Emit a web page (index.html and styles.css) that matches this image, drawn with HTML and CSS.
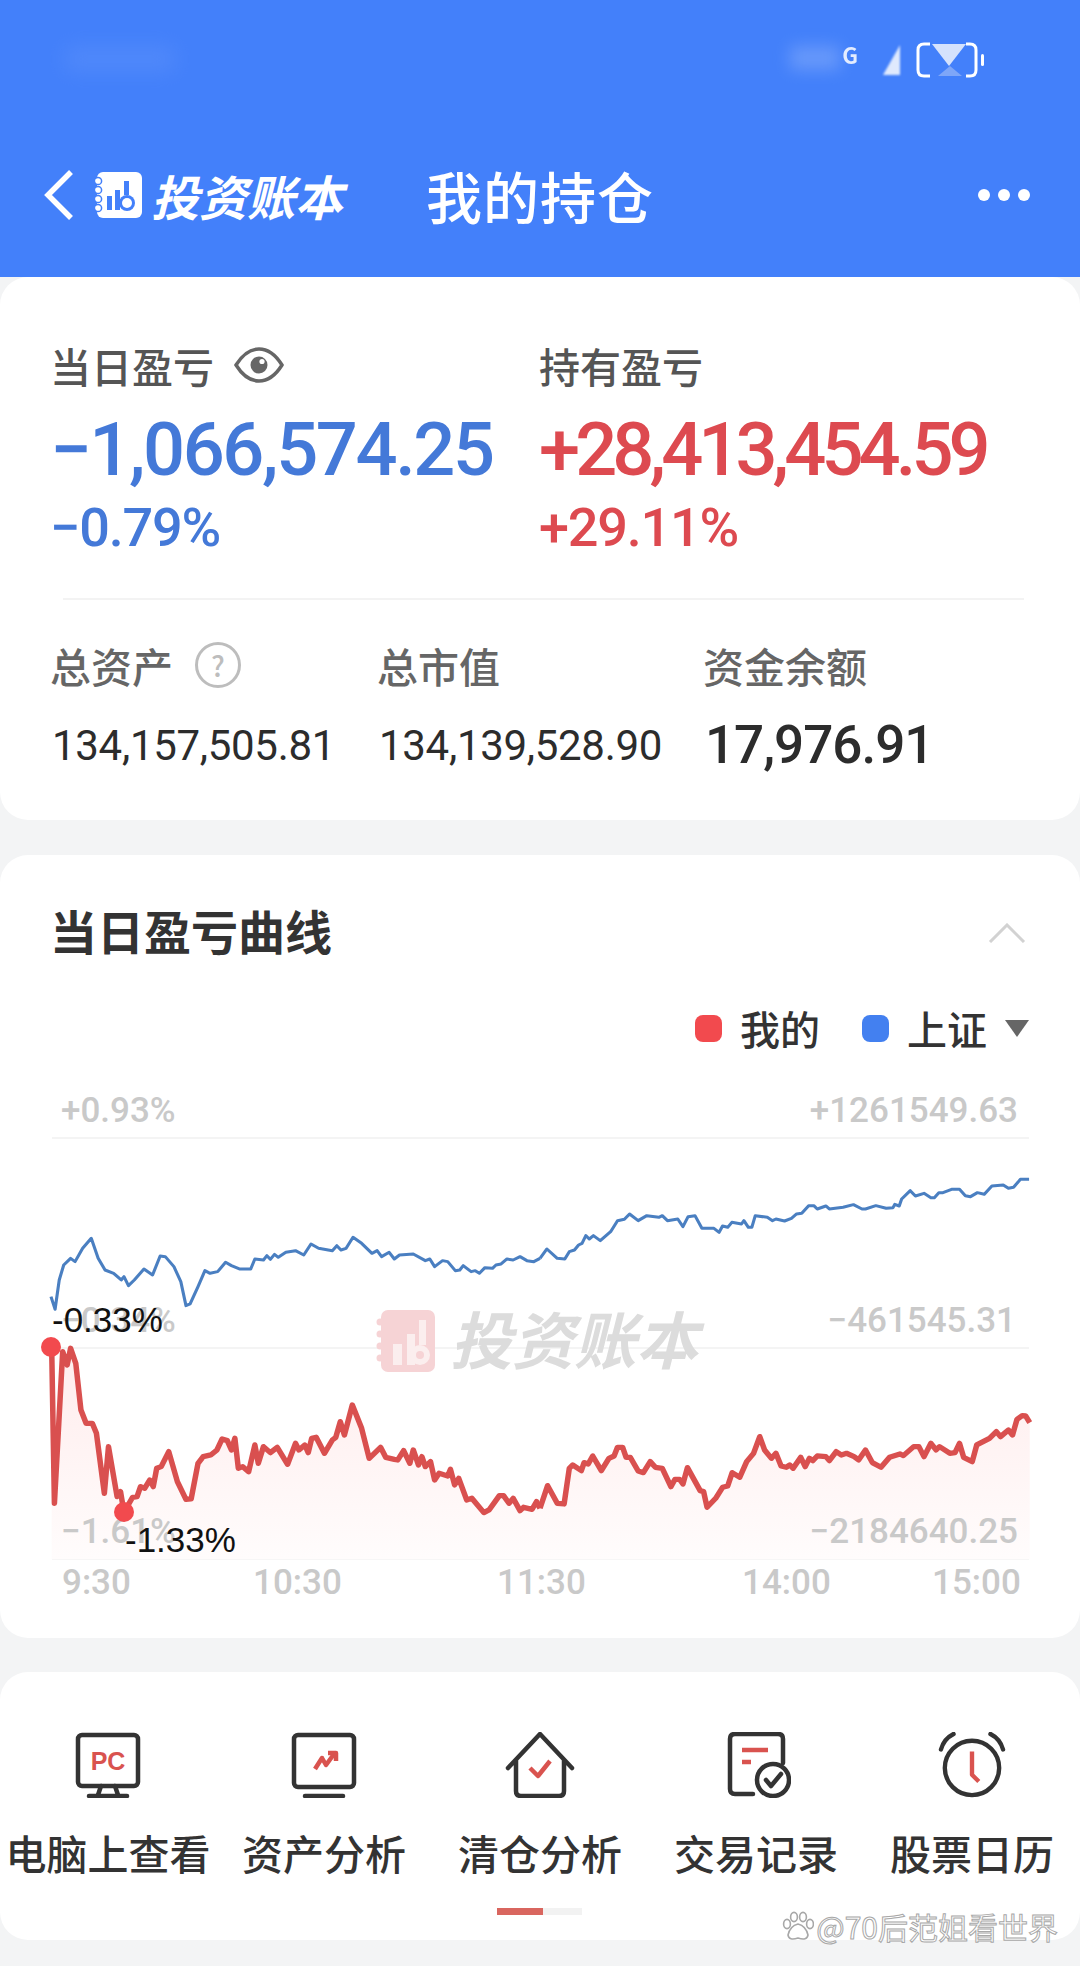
FILE: index.html
```html
<!DOCTYPE html>
<html lang="zh-CN">
<head>
  <meta charset="UTF-8">
  <meta name="viewport" content="width=device-width, initial-scale=1.0">
  <title>我的持仓</title>
  <link rel="stylesheet" href="styles.css">
</head>
<body>
  <header class="top">
    <!-- the status bar is smudged out in the original -->
    <div class="status">
      <span class="status-left"></span>
      <span class="status-mid"></span>
      <span class="status-g">G</span>
      <svg class="status-signal" width="20" height="32" viewBox="0 0 20 32"><path d="M18 1V31H1Z" fill="#dfe9fd"/></svg>
      <svg class="status-battery" width="68" height="36" viewBox="0 0 68 36">
        <path d="M14 2H8Q2 2 2 8V28Q2 34 8 34H14M50 2H54Q60 2 60 8V28Q60 34 54 34H50" fill="none" stroke="#fff" stroke-width="3"/>
        <path d="M16 2H50L33 24Z" fill="#d5e2fc"/>
        <path d="M22 34H46L34 24Z" fill="#7ea6f8"/>
        <rect x="65" y="12" width="3" height="12" rx="1.5" fill="#fff"/>
      </svg>
    </div>
    <nav class="nav">
      <svg class="nav-back" width="32" height="52" viewBox="0 0 32 52"><path d="M28 3L5 26L28 49" fill="none" stroke="#fff" stroke-width="5.5"/></svg>
      <svg class="nav-logo" width="48" height="46" viewBox="0 0 48 46">
        <rect x="3" y="0" width="45" height="46" rx="6" fill="#fff"/>
        <g fill="#fff" stroke="#4380fa" stroke-width="1.5">
          <circle cx="4" cy="9" r="3.6"/><circle cx="4" cy="18" r="3.6"/><circle cx="4" cy="27" r="3.6"/><circle cx="4" cy="36" r="3.6"/>
        </g>
        <g fill="#4380fa">
          <rect x="13" y="24" width="5" height="14"/>
          <rect x="21" y="18" width="5" height="20"/>
          <rect x="30" y="9" width="5" height="14"/>
          <circle cx="33" cy="31" r="8"/>
        </g>
        <circle cx="33" cy="31" r="5" fill="#fff"/>
      </svg>
      <span class="nav-brand">投资账本</span>
      <h1 class="nav-title">我的持仓</h1>
      <div class="nav-more"><i></i><i></i><i></i></div>
    </nav>
  </header>

  <section class="card summary">
    <div class="today">
      <div class="col">
        <div class="label">当日盈亏
          <svg class="eye" width="50" height="38" viewBox="0 0 50 38">
            <path d="M2 19Q12 3 25 3T48 19Q38 35 25 35T2 19Z" fill="none" stroke="#666" stroke-width="3.5"/>
            <circle cx="25" cy="19" r="8.5" fill="#666"/>
            <circle cx="28" cy="15.5" r="2.6" fill="#fff"/>
          </svg>
        </div>
        <div class="big blue">−1,066,574.25</div>
        <div class="pct blue">−0.79%</div>
      </div>
      <div class="col">
        <div class="label">持有盈亏</div>
        <div class="big red">+28,413,454.59</div>
        <div class="pct red">+29.11%</div>
      </div>
    </div>
    <div class="divider"></div>
    <div class="totals">
      <div>
        <div class="label small">总资产 <span class="help">?</span></div>
        <div class="amount">134,157,505.81</div>
      </div>
      <div>
        <div class="label small">总市值</div>
        <div class="amount">134,139,528.90</div>
      </div>
      <div>
        <div class="label small">资金余额</div>
        <div class="amount large">17,976.91</div>
      </div>
    </div>
  </section>

  <section class="card curve">
    <div class="curve-head">
      <h2>当日盈亏曲线</h2>
      <svg class="fold" width="38" height="20" viewBox="0 0 38 20"><path d="M2 19L19 2L36 19" fill="none" stroke="#d2d2d2" stroke-width="3"/></svg>
    </div>
    <div class="legend">
      <i class="dot dot-red"></i><span>我的</span>
      <i class="dot dot-blue"></i><span>上证</span>
      <svg class="legend-arrow" width="26" height="18" viewBox="0 0 26 18"><path d="M1 1H25L13 18Z" fill="#666"/></svg>
    </div>
    <svg class="chart" width="1080" height="520" viewBox="0 1090 1080 520">
      <defs>
        <linearGradient id="area" gradientUnits="userSpaceOnUse" x1="0" y1="900" x2="0" y2="1378">
          <stop offset="0" stop-color="#fff0f0"/>
          <stop offset="1" stop-color="#fffcfc"/>
        </linearGradient>
      </defs>

      <line class="grid" x1="52" y1="1138" x2="1029" y2="1138"/>
      <line class="grid" x1="52" y1="1348" x2="1029" y2="1348"/>
      <line class="grid" x1="52" y1="1559" x2="1029" y2="1559"/>

      <!-- watermark -->
      <g transform="translate(377 1310)">
        <rect x="4" y="0" width="54" height="62" rx="7" fill="#f6d3d5"/>
        <g fill="#fbeeee">
          <rect x="16" y="34" width="9" height="21"/>
          <rect x="30" y="24" width="8" height="31"/>
          <rect x="42" y="10" width="7" height="25"/>
          <circle cx="43" cy="45" r="10"/>
        </g>
        <circle cx="43" cy="45" r="4" fill="#f6d3d5"/>
        <g fill="#f6d3d5"><circle cx="3" cy="12" r="3.5"/><circle cx="3" cy="24" r="3.5"/><circle cx="3" cy="36" r="3.5"/><circle cx="3" cy="48" r="3.5"/></g>
      </g>
      <text class="mark" x="450" y="1364">投资账本</text>

      <g transform="translate(0 1100) scale(.3444 .3333)">
        <g fill="url(#area)">
          <polygon points="150,740 158,1210 182,755 195,795 205,745 220,790 235,930 250,970 268,970 280,1000 303,1180 315,1040 340,1190 350,1175 360,1237 385,1192 398,1190 408,1160 420,1165 435,1140 445,1160 455,1105 468,1100 490,1055 515,1145 540,1198 555,1197 575,1090 590,1070 612,1065 630,1050 645,1017 660,1022 672,1050 682,1015 692,1105 705,1100 722,1115 740,1035 750,1090 765,1040 785,1058 805,1042 835,1093 858,1030 868,1050 885,1035 895,1058 905,1015 918,1012 942,1060 965,1020 975,1012 988,965 1000,1005 1023,915 1050,985 1072,1075 1105,1042 1120,1072 1145,1078 1155,1080 1172,1052 1190,1090 1200,1050 1215,1095 1225,1070 1235,1100 1250,1085 1262,1140 1275,1120 1300,1128 1308,1108 1320,1155 1332,1135 1355,1200 1370,1195 1405,1238 1420,1230 1450,1187 1462,1187 1478,1210 1490,1195 1510,1232 1520,1222 1545,1228 1558,1205 1568,1225 1568,1378 150,1378"/>
          <polygon transform="translate(1568 0)" points="0,1225 22,1157 50,1210 70,1212 85,1105 95,1095 120,1112 128,1088 140,1092 153,1068 178,1112 200,1075 215,1068 225,1042 240,1042 250,1072 262,1072 285,1113 300,1118 320,1085 335,1102 355,1105 380,1160 392,1138 405,1138 415,1152 428,1103 465,1172 475,1175 485,1222 510,1195 530,1162 545,1158 558,1118 580,1132 600,1085 620,1060 638,1010 652,1050 672,1075 685,1060 700,1098 715,1102 725,1095 735,1105 757,1072 770,1100 782,1075 792,1082 805,1068 830,1070 840,1082 860,1055 875,1065 890,1060 912,1070 925,1080 945,1050 965,1088 990,1102 1015,1072 1045,1062 1055,1067 1085,1040 1100,1040 1115,1070 1135,1030 1150,1050 1160,1040 1190,1060 1205,1058 1218,1030 1230,1072 1255,1085 1268,1035 1305,1015 1325,995 1337,1010 1360,990 1372,1005 1385,958 1400,947 1410,948 1422,968 1422,1378 0,1378"/>
        </g>
        <g class="line-blue">
          <polyline points="148,590 160,628 172,540 185,495 205,475 218,485 240,445 265,415 285,475 305,510 330,520 352,540 360,530 373,557 390,540 418,507 443,525 465,468 480,470 505,500 525,545 540,617 552,612 575,560 595,512 610,520 632,515 655,487 672,497 695,507 728,507 740,477 765,480 775,467 785,478 797,463 808,472 830,457 858,452 882,465 903,432 925,445 965,452 978,437 990,450 1005,445 1025,412 1050,430 1080,460 1095,452 1108,470 1130,457 1145,477 1160,465 1200,462 1235,482 1248,477 1262,500 1285,482 1300,485 1322,512 1335,510 1345,497 1368,515 1380,512 1392,520 1408,503 1430,505 1440,495 1455,492 1472,477 1490,480 1510,470 1530,482 1550,485 1568,475"/>
          <polyline transform="translate(1568 0)" points="0,475 20,447 50,475 72,477 85,455 100,450 112,435 122,430 133,407 143,417 155,407 175,422 205,395 225,362 245,358 260,342 285,362 310,347 345,352 355,347 370,362 400,357 415,380 430,350 450,347 470,385 505,385 520,397 530,378 545,382 557,367 585,372 592,362 605,382 615,382 625,347 660,352 675,362 685,357 710,363 730,355 745,342 760,340 780,317 795,317 805,327 830,318 840,327 880,322 910,314 935,327 945,327 975,317 1005,325 1025,323 1030,313 1043,318 1050,297 1075,272 1090,288 1115,280 1135,293 1145,293 1158,278 1170,278 1195,268 1218,268 1235,287 1250,290 1270,278 1290,283 1312,258 1345,255 1360,265 1375,262 1395,238 1420,238"/>
        </g>
        <g class="line-red">
          <polyline points="150,740 158,1210 182,755 195,795 205,745 220,790 235,930 250,970 268,970 280,1000 303,1180 315,1040 340,1190 350,1175 360,1237 385,1192 398,1190 408,1160 420,1165 435,1140 445,1160 455,1105 468,1100 490,1055 515,1145 540,1198 555,1197 575,1090 590,1070 612,1065 630,1050 645,1017 660,1022 672,1050 682,1015 692,1105 705,1100 722,1115 740,1035 750,1090 765,1040 785,1058 805,1042 835,1093 858,1030 868,1050 885,1035 895,1058 905,1015 918,1012 942,1060 965,1020 975,1012 988,965 1000,1005 1023,915 1050,985 1072,1075 1105,1042 1120,1072 1145,1078 1155,1080 1172,1052 1190,1090 1200,1050 1215,1095 1225,1070 1235,1100 1250,1085 1262,1140 1275,1120 1300,1128 1308,1108 1320,1155 1332,1135 1355,1200 1370,1195 1405,1238 1420,1230 1450,1187 1462,1187 1478,1210 1490,1195 1510,1232 1520,1222 1545,1228 1558,1205 1568,1225"/>
          <polyline transform="translate(1568 0)" points="0,1225 22,1157 50,1210 70,1212 85,1105 95,1095 120,1112 128,1088 140,1092 153,1068 178,1112 200,1075 215,1068 225,1042 240,1042 250,1072 262,1072 285,1113 300,1118 320,1085 335,1102 355,1105 380,1160 392,1138 405,1138 415,1152 428,1103 465,1172 475,1175 485,1222 510,1195 530,1162 545,1158 558,1118 580,1132 600,1085 620,1060 638,1010 652,1050 672,1075 685,1060 700,1098 715,1102 725,1095 735,1105 757,1072 770,1100 782,1075 792,1082 805,1068 830,1070 840,1082 860,1055 875,1065 890,1060 912,1070 925,1080 945,1050 965,1088 990,1102 1015,1072 1045,1062 1055,1067 1085,1040 1100,1040 1115,1070 1135,1030 1150,1050 1160,1040 1190,1060 1205,1058 1218,1030 1230,1072 1255,1085 1268,1035 1305,1015 1325,995 1337,1010 1360,990 1372,1005 1385,958 1400,947 1410,948 1422,968"/>
        </g>
      </g>

      <g class="axis">
        <text x="61" y="1122">+0.93%</text>
        <text x="61" y="1332">−0.34%</text>
        <text x="61" y="1543">−1.61%</text>
        <text class="end" x="1018" y="1122">+1261549.63</text>
        <text class="end" x="1016" y="1332">−461545.31</text>
        <text class="end" x="1018" y="1543">−2184640.25</text>
        <text x="62" y="1594">9:30</text>
        <text x="253" y="1594">10:30</text>
        <text x="497" y="1594">11:30</text>
        <text x="742" y="1594">14:00</text>
        <text x="932" y="1594">15:00</text>
      </g>

      <circle class="peak" cx="51" cy="1347" r="10"/>
      <circle class="peak" cx="124" cy="1512" r="10"/>
      <text class="note" x="52" y="1332">-0.33%</text>
      <text class="note" x="125" y="1552">-1.33%</text>
    </svg>
  </section>

  <section class="card tools">
    <div class="tool-row">
      <div class="tool">
        <svg width="70" height="66" viewBox="0 0 70 66">
          <rect x="5" y="3" width="60" height="51" rx="4" class="ink"/>
          <path d="M28 54L25 63M42 54L45 63" class="ink"/>
          <path d="M16 64H54" class="ink"/>
          <text class="pc" x="35" y="38">PC</text>
        </svg>
        <span>电脑上查看</span>
      </div>
      <div class="tool">
        <svg width="70" height="66" viewBox="0 0 70 66">
          <rect x="5" y="3" width="60" height="52" rx="4" class="ink"/>
          <path d="M16 64H54" class="ink"/>
          <path d="M26 37L33 26L37 33L45 22" class="accent"/>
          <path d="M39 21H47V29" class="accent"/>
        </svg>
        <span>资产分析</span>
      </div>
      <div class="tool">
        <svg width="70" height="66" viewBox="0 0 70 66">
          <path d="M3 36L35 2L67 36M11 28V59Q11 64 16 64H54Q59 64 59 59V28" class="ink"/>
          <path d="M25 36L33 44L45 29" class="accent"/>
        </svg>
        <span>清仓分析</span>
      </div>
      <div class="tool">
        <svg width="70" height="66" viewBox="0 0 70 66">
          <path d="M32 62H14Q9 62 9 57V7Q9 2 14 2H57Q62 2 62 7V31" class="ink"/>
          <path d="M21 18H47M21 30H30" class="accent"/>
          <circle cx="52" cy="48" r="16" class="ink" fill="#fff"/>
          <path d="M45 48L50 54L60 42" class="ink"/>
        </svg>
        <span>交易记录</span>
      </div>
      <div class="tool">
        <svg width="70" height="68" viewBox="0 0 70 68">
          <circle cx="35" cy="37" r="28" class="ink"/>
          <path d="M35 20V44L42 51" class="accent"/>
          <path d="M16 2Q6 7 3 18M54 2Q64 7 67 18" class="ink"/>
        </svg>
        <span>股票日历</span>
      </div>
    </div>
    <div class="pager"><i></i></div>
    <!-- platform watermark stamped over the corner -->
    <div class="stamp">
      <svg width="32" height="32" viewBox="0 0 32 32">
        <g fill="#fff" stroke="#a8a8a8" stroke-width="1.6">
          <ellipse cx="5" cy="14" rx="3.4" ry="4.6"/><ellipse cx="12" cy="7" rx="3.4" ry="4.6"/><ellipse cx="21" cy="7" rx="3.4" ry="4.6"/><ellipse cx="28" cy="14" rx="3.4" ry="4.6"/>
          <path d="M16 14Q24 16 26 25Q25 31 16 28Q7 31 6 25Q8 16 16 14Z"/>
        </g>
      </svg>
      <span>@70后范姐看世界</span>
    </div>
  </section>
</body>
</html>
```

FILE: styles.css
```css
* {
  box-sizing: border-box;
}

body {
  margin: 0;
  width: 1080px;
  height: 1966px;
  overflow: hidden;
  background-color: #f3f4f5;
  font-family: "Noto Sans CJK SC", "Noto Sans", sans-serif;
  color: #333;
}

h1, h2 {
  margin: 0;
  font-weight: 500;
}

/* header */
.top {
  height: 277px;
  padding-top: 40px;
  background-color: #4380fa;
}

.status {
  height: 40px;
  padding-right: 96px;
  display: flex;
  align-items: center;
  justify-content: flex-end;
  position: relative;
}

.status-left {
  position: absolute;
  left: 65px;
  top: 6px;
  width: 110px;
  height: 26px;
  background-color: #6d9cfb;
  filter: blur(10px);
  opacity: .3;
}

.status-mid {
  position: absolute;
  left: 790px;
  top: 6px;
  width: 50px;
  height: 24px;
  background-color: #8ab0fb;
  filter: blur(8px);
  opacity: .5;
}

.status-g {
  margin: 0 24px 12px 0;
  font-size: 22px;
  font-weight: 700;
  color: #e4ecfe;
  filter: blur(.6px);
}

.status-signal {
  margin-right: 14px;
  filter: blur(1px);
}

.status-battery {
  filter: blur(.6px);
}

.nav {
  margin-top: 90px;
  height: 50px;
  padding: 0 50px 0 43px;
  display: flex;
  align-items: center;
  color: #fff;
}

.nav-logo {
  margin-left: 19px;
}

.nav-brand {
  margin-left: 9px;
  font-size: 48px;
  font-weight: 700;
  font-style: italic;
  line-height: 50px;
}

.nav-title {
  margin-left: 83px;
  font-size: 56px;
  line-height: 50px;
  letter-spacing: 1px;
}

.nav-more {
  margin-left: auto;
  display: flex;
  gap: 8px;
}

.nav-more i {
  width: 12px;
  height: 12px;
  border-radius: 50%;
  background-color: #fff;
}

/* cards */
.card {
  background-color: #fff;
  border-radius: 28px;
}

.summary {
  height: 543px;
  padding: 68px 52px 0 50px;
}

.today {
  display: flex;
}

.col {
  width: 490px;
}

.label {
  display: flex;
  align-items: center;
  height: 40px;
  font-size: 41px;
  font-weight: 500;
  line-height: 40px;
  color: #555;
}

.eye {
  margin-left: 20px;
}

.big {
  margin-top: 28px;
  font-family: Roboto, sans-serif;
  font-size: 74px;
  font-weight: 500;
  line-height: 74px;
  letter-spacing: -2.4px;
}

.big.red {
  letter-spacing: -4.9px;
}

.pct {
  margin-top: 14px;
  font-family: Roboto, sans-serif;
  font-size: 54px;
  font-weight: 500;
  line-height: 54px;
  letter-spacing: -1.2px;
}

.blue {
  color: #4479d8;
}

.red {
  color: #dd4a50;
}

.divider {
  margin: 43px 4px 0 13px;
  height: 2px;
  background-color: #f3f3f3;
}

.totals {
  margin-top: 45px;
  display: grid;
  grid-template-columns: 327px 326px 1fr;
}

.label.small {
  color: #666;
}

.help {
  margin-left: 22px;
  width: 46px;
  height: 46px;
  border: 3px solid #bdbdbd;
  border-radius: 50%;
  display: flex;
  align-items: center;
  justify-content: center;
  font-size: 28px;
  line-height: 1;
  color: #bdbdbd;
}

.amount {
  height: 62px;
  margin: 29px 0 0 2px;
  display: flex;
  align-items: center;
  font-family: Roboto, sans-serif;
  font-size: 42px;
  letter-spacing: -.3px;
  color: #2c2c2c;
}

.amount.large {
  font-size: 53px;
  font-weight: 500;
  letter-spacing: -1px;
}

/* curve */
.curve {
  margin-top: 35px;
  height: 783px;
  padding-top: 52px;
}

.curve-head {
  padding: 0 54px 0 50px;
  display: flex;
  align-items: center;
  justify-content: space-between;
}

.curve-head h2 {
  font-size: 47px;
  line-height: 46px;
  font-weight: 700;
  color: #333;
}

.fold {
  margin-top: 5px;
}

.legend {
  margin-top: 55px;
  height: 40px;
  padding-right: 50px;
  display: flex;
  align-items: center;
  justify-content: flex-end;
  font-size: 40px;
  font-weight: 500;
  line-height: 40px;
  color: #333;
}

.dot {
  width: 27px;
  height: 27px;
  border-radius: 8px;
  margin-right: 18px;
}

.dot-red {
  background-color: #f24a4e;
}

.dot-blue {
  margin-left: 42px;
  background-color: #4380f0;
}

.legend-arrow {
  margin-left: 17px;
}

.chart {
  display: block;
  margin-top: 42px;
}

.grid {
  stroke: #f4f4f4;
  stroke-width: 2;
}

.mark {
  font-size: 62px;
  font-weight: 700;
  font-style: italic;
  fill: #dcdcdc;
}

.line-blue polyline, .line-red polyline {
  fill: none;
  stroke-linejoin: round;
}

.line-blue polyline {
  stroke: #4a7fc1;
  stroke-width: 9;
}

.line-red polyline {
  stroke: #d9504f;
  stroke-width: 16;
}

.axis text {
  font-family: Roboto, sans-serif;
  font-size: 35px;
  font-weight: 500;
  fill: #c9c9c9;
}

.axis .end {
  text-anchor: end;
}

.peak {
  fill: #f24a4e;
}

.note {
  font-family: "Liberation Sans", sans-serif;
  font-size: 35px;
  fill: #111;
}

/* tools */
.tools {
  margin-top: 34px;
  height: 268px;
  padding-top: 60px;
  position: relative;
}

.tool-row {
  display: grid;
  grid-template-columns: repeat(5, 1fr);
}

.tool {
  display: flex;
  flex-direction: column;
  align-items: center;
  font-size: 41px;
  font-weight: 500;
  line-height: 40px;
  color: #333;
}

.tool svg {
  margin-bottom: 34px;
  height: 66px;
}

.ink {
  fill: none;
  stroke: #333;
  stroke-width: 4.5;
  stroke-linecap: round;
  stroke-linejoin: round;
}

.accent {
  fill: none;
  stroke: #d9534f;
  stroke-width: 4.5;
  stroke-linejoin: round;
}

.pc {
  font-family: "Liberation Sans", sans-serif;
  font-size: 25px;
  font-weight: 700;
  text-anchor: middle;
  fill: #d9534f;
}

.pager {
  margin: 36px 0 0 497px;
  width: 85px;
  height: 7px;
  background-color: #f2f2f2;
}

.pager i {
  display: block;
  width: 46px;
  height: 7px;
  background-color: #d9665f;
}

.stamp {
  position: absolute;
  right: 22px;
  bottom: -2px;
  display: flex;
  align-items: center;
  gap: 2px;
  font-size: 30px;
  line-height: 32px;
  color: #fff;
  -webkit-text-stroke: 1px #a8a8a8;
}
```
